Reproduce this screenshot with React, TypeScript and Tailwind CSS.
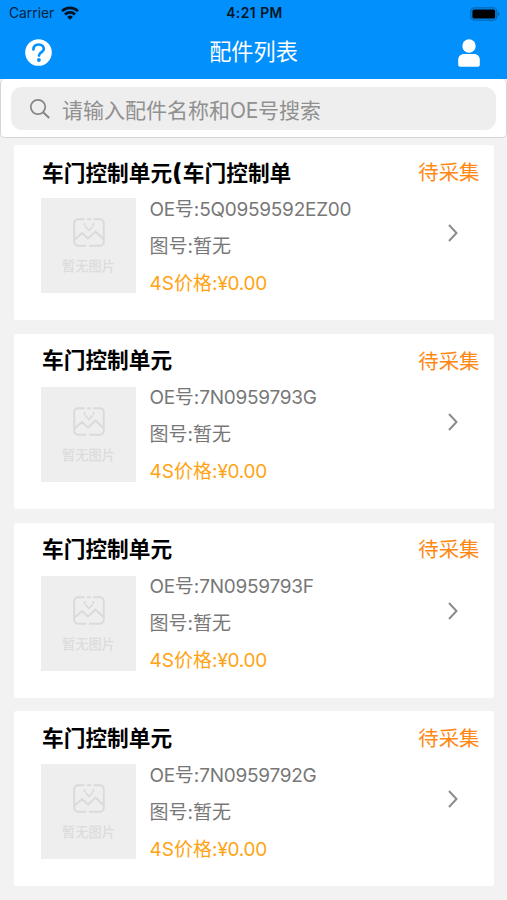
interface Part {
  name: string;
  oe: string;
}

const parts: Part[] = [
  { name: "车门控制单元(车门控制单", oe: "5Q0959592EZ00" },
  { name: "车门控制单元", oe: "7N0959793G" },
  { name: "车门控制单元", oe: "7N0959793F" },
  { name: "车门控制单元", oe: "7N0959792G" },
];

function StatusBar() {
  return (
    <div className="grid h-[28px] grid-cols-3 items-center pr-[7px] pl-[9px] text-[13.8px] leading-none text-[#06223d]">
      <div className="flex items-center gap-[7px]">
        <span>Carrier</span>
        <svg className="-mt-[2px]" width="18" height="14" viewBox="0 0 18 14" fill="none" stroke="#001426" strokeWidth="2.7">
          <path d="M1 5.1a11.4 11.4 0 0 1 16 0" />
          <path d="M4 8.5a7.1 7.1 0 0 1 10 0" />
          <path d="M9 13.8 6.1 10.9a4.2 4.2 0 0 1 5.8 0Z" fill="#001426" stroke="none" />
        </svg>
      </div>
      <span className="text-center font-semibold tracking-[0.5px] whitespace-nowrap text-[#001426]">4:21 PM</span>
      <svg className="-mt-px justify-self-end" width="30" height="14" viewBox="0 0 30 14">
        <rect x="0.8" y="0.8" width="26" height="12.4" rx="3.6" fill="none" stroke="#0566b2" strokeWidth="1.2" />
        <rect x="2.4" y="2.4" width="22.8" height="9.2" rx="1.6" fill="#000" />
        <path d="M27.9 4.8c2 .6 2 3.8 0 4.4Z" fill="#0566b2" />
      </svg>
    </div>
  );
}

function NavBar() {
  return (
    <div className="flex h-[51px] items-center justify-between pr-[26px] pb-[2px] pl-[25px]">
      <svg width="27" height="27" viewBox="0 0 27 27">
        <circle cx="13.5" cy="13.5" r="13.3" fill="#fff" />
        <path
          d="M8.4 10.4c0-3 2.2-4.900 5.200-4.900s5.200 1.900 5.200 4.500c0 3.400-4.800 3.500-4.800 6.600"
          fill="none"
          stroke="#0190fc"
          strokeWidth="2.7"
          strokeLinecap="round"
        />
        <circle cx="13.9" cy="21" r="1.9" fill="#0190fc" />
      </svg>
      <h1 className="-ml-[2px] text-[22.2px] leading-none font-normal text-white">配件列表</h1>
      <svg width="24" height="28" viewBox="0 0 24 28" fill="#fff">
        <circle cx="12" cy="7" r="6.7" />
        <path d="M1.200 21c0-3.600 2.400-5.900 5.800-5.900h10c3.400 0 5.800 2.300 5.800 5.900v4.700c0 1.200-.8 2-2 2H3.200c-1.200 0-2-.8-2-2Z" />
      </svg>
    </div>
  );
}

function SearchBar() {
  return (
    <div className="h-[59px] rounded-[5px] border border-t-0 border-[#d5d5d5] bg-white px-[10px] pt-[8px]">
      <div className="flex h-[43px] items-center rounded-[11px] bg-[#eeeeee] pl-[18px]">
        <svg width="22" height="22" viewBox="0 0 22 22" fill="none" stroke="#858585" strokeWidth="1.7">
          <circle cx="9" cy="9" r="7.2" />
          <path d="m14.2 14.2 6 5.8" strokeWidth="2" />
        </svg>
        <span className="mt-[3px] ml-[11px] text-[21px] leading-none text-[#909090]">
          请输入配件名称和<span className="tracking-[-0.3px]">OE</span>号搜索
        </span>
      </div>
    </div>
  );
}

function EmptyPicture() {
  return (
    <div className="flex h-[95px] w-[95px] flex-col items-center bg-[#eeeeee] pt-[20px]">
      <svg
        width="32"
        height="29"
        viewBox="0 0 32 29"
        fill="none"
        stroke="#dadada"
        strokeWidth="1.9"
        strokeLinejoin="round"
      >
        <path d="M11.5 1.2H5a3.800 3.800 0 0 0-3.800 3.800v19A3.800 3.800 0 0 0 5 27.800h8M16 27.800h11a3.800 3.800 0 0 0 3.800-3.800V5A3.800 3.800 0 0 0 27 1.200h-6.500M14 1.200h4" />
        <path d="m1.700 21.500 7.300-6.500 6 5.500 7.500-7 8.300 8" />
        <path d="M11.600 5v3M20.400 5v3M12.300 8.500l3.700 4 3.700-4" strokeWidth="1.700" />
      </svg>
      <span className="mt-[11px] text-[13.3px] leading-[16px] font-medium text-[#dcdcdc]">暂无图片</span>
    </div>
  );
}

function PartCard({ part }: { part: Part }) {
  return (
    <li className="h-[175px] rounded-[2px] bg-white pr-[14.5px] pl-[27px]">
      <div className="flex h-[53px] items-center justify-between pt-[2px] whitespace-nowrap">
        <h2 className="ml-[1px] text-[21.7px] leading-none font-bold text-black">
          {part.name.split("(").map((text, i) => (
            <span key={i}>
              {i > 0 && <span className="mr-[1.5px] text-[24px] leading-none font-extrabold">(</span>}
              {text}
            </span>
          ))}
        </h2>
        <span className="pt-px text-[20.4px] leading-none text-[#ff8814]">待采集</span>
      </div>
      <div className="flex">
        <EmptyPicture />
        <div className="-mt-[7.5px] ml-[13.5px] flex-1 text-[19px] leading-[37px] text-[#777777]">
          <p>
            <span className="tracking-[-0.4px]">OE</span>号:
            <span className="tracking-[-0.25px]">{part.oe}</span>
          </p>
          <p>图号:暂无</p>
          <p className="text-[#ffa313]">
            4S价格:<span className="tracking-[-0.3px]">¥0.00</span>
          </p>
        </div>
        <svg
          className="mt-[26px] mr-[20.5px]"
          width="12"
          height="18"
          viewBox="0 0 12 18"
          fill="none"
          stroke="#8c8c8c"
          strokeWidth="2"
        >
          <path d="m2 1 7.500 8L2 17" />
        </svg>
      </div>
    </li>
  );
}

export default function App() {
  return (
    <div className="h-[900px] w-[507px] overflow-hidden bg-[#f2f2f2] font-[Inter,'Noto_Sans_CJK_SC',sans-serif]">
      <header className="bg-[#0190fc]">
        <StatusBar />
        <NavBar />
      </header>
      <SearchBar />
      <ul className="mt-[7px] flex flex-col gap-[13.8px] pr-[13px] pl-[14px]">
        {parts.map((part) => (
          <PartCard key={part.oe} part={part} />
        ))}
      </ul>
    </div>
  );
}
